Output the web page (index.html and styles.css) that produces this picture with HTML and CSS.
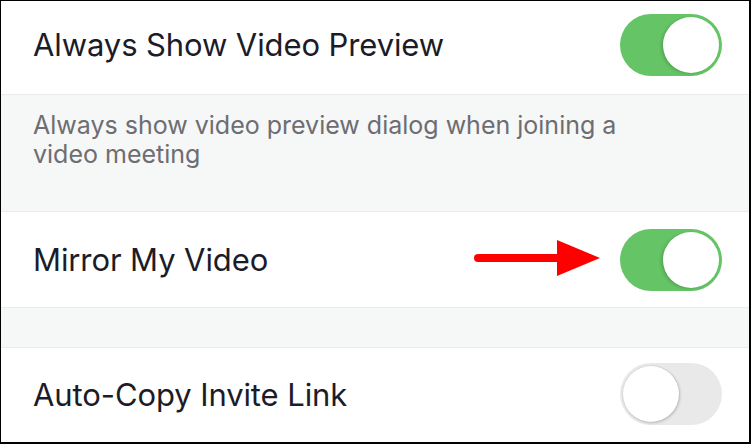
FILE: index.html
```html
<!DOCTYPE html>
<html>
<head>
<meta charset="utf-8">
<link rel="stylesheet" href="styles.css">
</head>
<body>
<div class="frame">
  <div class="row row-first">
    <span class="label">Always Show Video Preview</span>
    <span class="toggle on"><span class="knob"></span></span>
  </div>
  <div class="desc">Always show video preview dialog when joining a video meeting</div>
  <div class="row row-mid">
    <span class="label">Mirror My Video</span>
    <svg class="arrow" width="130" height="40" viewBox="0 0 130 40">
      <line x1="8" y1="18" x2="90" y2="18" stroke="#ff0000" stroke-width="8" stroke-linecap="round"/>
      <polygon points="87,0 130,18 87,36" fill="#ff0000"/>
    </svg>
    <span class="toggle on"><span class="knob"></span></span>
  </div>
  <div class="gap"></div>
  <div class="row row-last">
    <span class="label">Auto-Copy Invite Link</span>
    <span class="toggle off"><span class="knob"></span></span>
  </div>
</div>
</body>
</html>
```
FILE: styles.css
```css
html, body {
  margin: 0;
  padding: 0;
  background: #ffffff;
}
.frame {
  box-sizing: border-box;
  width: 751px;
  height: 444px;
  overflow: hidden;
  border-style: solid;
  border-color: #000000;
  border-width: 1px 2px 2px 1px;
  font-family: Inter, "Noto Sans", sans-serif;
  display: flex;
  flex-direction: column;
}
.row {
  position: relative;
  box-sizing: border-box;
  display: flex;
  align-items: center;
  justify-content: space-between;
  padding: 0 27px 0 32px;
  background: #ffffff;
  flex: none;
}
.row-first {
  height: 94px;
  padding-bottom: 6px;
  border-bottom: 1px solid #ebebeb;
}
.row-mid {
  height: 96px;
  border-bottom: 1px solid #ebebeb;
}
.row-last {
  height: 94px;
  padding-bottom: 2px;
}
.label {
  font-size: 31px;
  color: #1c1c28;
  letter-spacing: -0.1px;
}
.desc {
  box-sizing: border-box;
  height: 117px;
  flex: none;
  background: #f6f7f7;
  border-bottom: 1px solid #ebebeb;
  color: #6d6d72;
  font-size: 25px;
  line-height: 29px;
  padding: 16px 100px 0 32px;
}
.gap {
  height: 40px;
  flex: none;
  box-sizing: border-box;
  background: #f6f7f7;
  border-bottom: 1px solid #ebebeb;
}
.toggle {
  position: relative;
  width: 102px;
  height: 62px;
  border-radius: 31px;
  flex: none;
}
.toggle.on {
  background: #65c466;
}
.toggle.off {
  background: #e9e9ea;
}
.knob {
  position: absolute;
  top: 3px;
  width: 56px;
  height: 56px;
  border-radius: 50%;
  background: #ffffff;
}
.toggle.on .knob {
  right: 3px;
  box-shadow: -2px 1px 3px rgba(0, 0, 0, 0.15);
}
.toggle.off .knob {
  left: 3px;
  box-shadow: 1px 1px 3px rgba(0, 0, 0, 0.2), 0 0 0 1px rgba(0,0,0,0.04);
}
.arrow {
  position: absolute;
  left: 469px;
  top: 28px;
}
```
